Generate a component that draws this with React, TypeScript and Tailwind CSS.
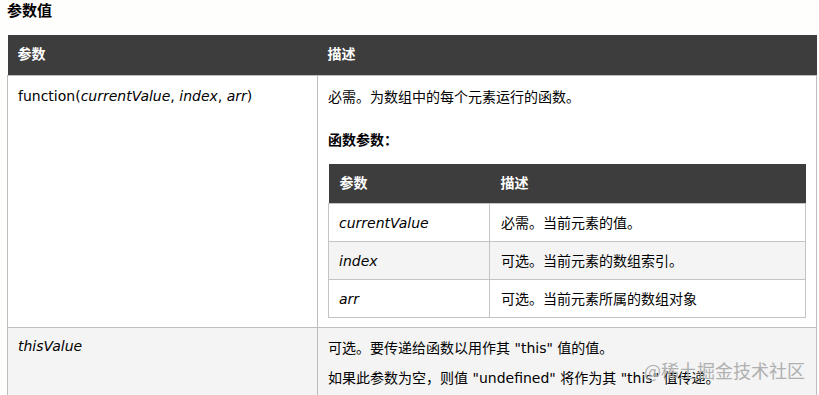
import React from "react";

const font = { fontFamily: '"DejaVu Sans", "Noto Sans CJK SC", sans-serif' };

const innerRows = [
  { name: "currentValue", desc: "必需。当前元素的值。", bg: "bg-white" },
  { name: "index", desc: "可选。当前元素的数组索引。", bg: "bg-[#f4f4f4]" },
  { name: "arr", desc: "可选。当前元素所属的数组对象", bg: "bg-white" },
];

export default function App() {
  return (
    <div className="relative w-[819px] h-[395px] overflow-hidden bg-[#fefefc] text-[14px] text-black" style={font}>
      {/* 标题 */}
      <h3 className="pl-[7px] pt-[1px] h-[35px] text-[15px] font-bold leading-[20px]">参数值</h3>

      {/* 外层表格 */}
      <table className="ml-[7px] w-[810px] table-fixed border-collapse">
        <thead>
          <tr className="bg-[#3d3d3d] text-white h-[40px]">
            <th className="w-[310px] px-[10px] text-left font-bold">参数</th>
            <th className="px-[10px] text-left font-bold">描述</th>
          </tr>
        </thead>
        <tbody>
          {/* ROW 1 */}
          <tr className="bg-white">
            <td className="align-top border border-[#bdbdbd] px-[10px] pt-[10px] pb-[9px] leading-[20px]">
              function(<i>currentValue</i>, <i>index</i>, <i>arr</i>)
            </td>
            <td className="align-top border border-[#bdbdbd] px-[10px] pt-[11px] pb-[9px] leading-[20px]">
              <p>必需。为数组中的每个元素运行的函数。</p>
              <p className="mt-[23px] mb-[14px] font-bold">函数参数：</p>

              {/* 内层表格 */}
              <table className="w-full table-fixed border-collapse">
                <thead>
                  <tr className="bg-[#3d3d3d] text-white h-[40px]">
                    <th className="w-[161px] px-[11px] text-left font-bold">参数</th>
                    <th className="px-[11px] text-left font-bold">描述</th>
                  </tr>
                </thead>
                <tbody>
                  {innerRows.map((r) => (
                    <tr key={r.name} className={`${r.bg} h-[38px]`}>
                      <td className="border border-[#c4c4c4] px-[10px] italic">{r.name}</td>
                      <td className="border border-[#c4c4c4] px-[11px]">{r.desc}</td>
                    </tr>
                  ))}
                </tbody>
              </table>
            </td>
          </tr>

          {/* ROW 2 */}
          <tr className="bg-[#f4f4f4]">
            <td className="align-top border border-[#bdbdbd] px-[10px] pt-[8px] pb-[10px] leading-[20px] italic">
              thisValue
            </td>
            <td className="align-top border border-[#bdbdbd] px-[10px] pt-[10px] pb-[10px] leading-[20px]">
              <p>可选。要传递给函数以用作其 "this" 值的值。</p>
              <p className="mt-[10px]">如果此参数为空，则值 "undefined" 将作为其 "this" 值传递。</p>
            </td>
          </tr>
        </tbody>
      </table>

      {/* 水印 */}
      <div
        className="absolute right-[14px] top-[358px] text-[18px] leading-[24px] text-[#a9a9a9] opacity-90"
        style={{ fontFamily: '"Noto Sans CJK SC", sans-serif' }}
      >
        @稀土掘金技术社区
      </div>
    </div>
  );
}
